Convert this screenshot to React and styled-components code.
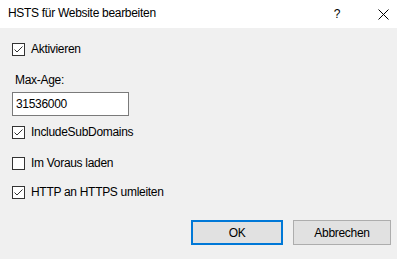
import React from "react";
import styled, { createGlobalStyle } from "styled-components";

const Global = createGlobalStyle`
  html, body {
    margin: 0;
    padding: 0;
    background: #f0f0f0;
  }
  body {
    font-family: "Liberation Sans", Arial, sans-serif;
    font-size: 12px;
    letter-spacing: -0.3px;
    color: #000;
  }
`;

const Dialog = styled.div`
  width: 397px;
  height: 259px;
  display: flex;
  flex-flow: column;
  background: #f0f0f0;
`;

const TitleBar = styled.div`
  height: 28px;
  display: flex;
  align-items: center;
  background: #fff;
  padding-left: 8px;
`;

const Title = styled.div`
  flex: 1 1;
  font-size: 12px;
  line-height: 16px;
  margin-top: -2px;
`;

const TitleButton = styled.div`
  width: 28px;
  height: 28px;
  display: flex;
  align-items: center;
  justify-content: center;
  font-size: 12px;
  margin-right: ${(p) => p.$gap || 0}px;
`;

const Body = styled.div`
  flex: 1 1;
  display: flex;
  flex-flow: column;
  padding: 15px 6px 0 12px;
`;

const Check = styled.label`
  display: flex;
  align-items: center;
  height: 13px;
  margin-top: ${(p) => p.$top}px;
  gap: 6px;
  line-height: 13px;
`;

const Box = styled.span`
  width: 13px;
  height: 13px;
  box-sizing: border-box;
  border: 1px solid #333;
  background: #fff;
  display: flex;
  align-items: center;
  justify-content: center;
`;

const Label = styled.div`
  margin: 16px 0 0 3px;
  line-height: 16px;
`;

const Input = styled.div`
  width: 117px;
  height: 24px;
  box-sizing: border-box;
  margin-top: 4px;
  border: 1px solid #7a7a7a;
  background: #fff;
  padding: 0 3px;
  display: flex;
  align-items: center;
`;

const Buttons = styled.div`
  display: flex;
  justify-content: flex-end;
  gap: 10px;
  margin-top: 21px;
`;

const Button = styled.div`
  width: ${(p) => p.$w}px;
  height: 25px;
  box-sizing: border-box;
  background: #e1e1e1;
  border: ${(p) => (p.$primary ? "2px solid #0078d7" : "1px solid #adadad")};
  display: flex;
  align-items: center;
  justify-content: center;
`;

const Checkbox = ({ checked, top, children }) => (
  <Check $top={top}>
    <Box>
      {checked && (
        <svg width="11" height="11" viewBox="0 0 11 11">
          <path d="M1.5 5.5 L4 8 L9.5 2.5" fill="none" stroke="#333" strokeWidth="1" />
        </svg>
      )}
    </Box>
    {children}
  </Check>
);

const App = () => (
  <Dialog>
    <Global />
    <TitleBar>
      <Title>HSTS für Website bearbeiten</Title>
      <TitleButton $gap={18}>?</TitleButton>
      <TitleButton>
        <svg width="11" height="11" viewBox="0 0 11 11">
          <path d="M0.5 0.5 L10.5 10.5 M10.5 0.5 L0.5 10.5" stroke="#000" strokeWidth="1" />
        </svg>
      </TitleButton>
    </TitleBar>
    <Body>
      <Checkbox checked top={0}>Aktivieren</Checkbox>
      <Label>Max-Age:</Label>
      <Input>31536000</Input>
      <Checkbox checked top={10}>IncludeSubDomains</Checkbox>
      <Checkbox top={18}>Im Voraus laden</Checkbox>
      <Checkbox checked top={16}>HTTP an HTTPS umleiten</Checkbox>
      <Buttons>
        <Button $primary $w={92}>OK</Button>
        <Button $w={98}>Abbrechen</Button>
      </Buttons>
    </Body>
  </Dialog>
);

export default App;
